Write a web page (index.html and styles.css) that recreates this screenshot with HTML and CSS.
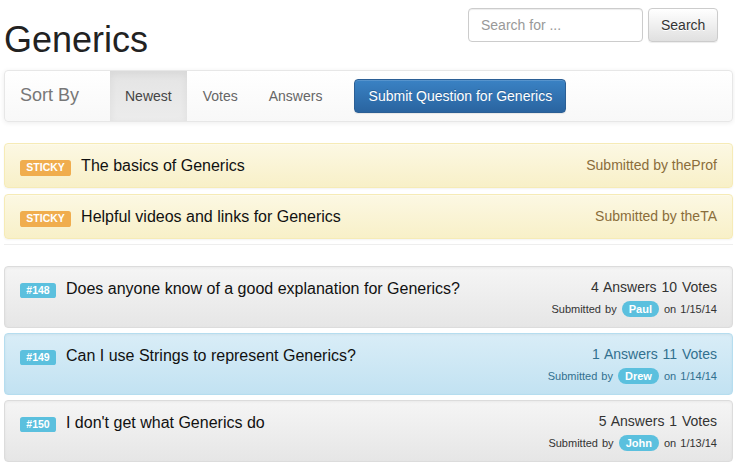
FILE: index.html
```html
<!DOCTYPE html>
<html>
<head>
<meta charset="utf-8">
<link rel="stylesheet" href="styles.css">
</head>
<body>
<div class="page">
  <div class="header">
    <h1 class="title">Generics</h1>
    <form class="search">
      <input class="search-input" type="text" placeholder="Search for ...">
      <button class="btn btn-default" type="button">Search</button>
    </form>
  </div>

  <nav class="navbar">
    <span class="brand">Sort By</span>
    <ul class="nav">
      <li class="nav-item active">Newest</li>
      <li class="nav-item">Votes</li>
      <li class="nav-item">Answers</li>
    </ul>
    <button class="btn btn-primary" type="button">Submit Question for Generics</button>
  </nav>

  <div class="sticky">
    <div class="sticky-title"><span class="label label-warning">STICKY</span><span class="q-text">The basics of Generics</span></div>
    <div class="sticky-by">Submitted by theProf</div>
  </div>
  <div class="sticky">
    <div class="sticky-title"><span class="label label-warning">STICKY</span><span class="q-text">Helpful videos and links for Generics</span></div>
    <div class="sticky-by">Submitted by theTA</div>
  </div>

  <hr class="divider">

  <div class="question">
    <div class="q-left"><span class="label label-info">#148</span><span class="q-text">Does anyone know of a good explanation for Generics?</span></div>
    <div class="q-right">
      <div class="q-stats">4 Answers 10 Votes</div>
      <div class="q-meta">Submitted by <span class="badge">Paul</span> on 1/15/14</div>
    </div>
  </div>
  <div class="question question-info">
    <div class="q-left"><span class="label label-info">#149</span><span class="q-text">Can I use Strings to represent Generics?</span></div>
    <div class="q-right">
      <div class="q-stats">1 Answers 11 Votes</div>
      <div class="q-meta">Submitted by <span class="badge">Drew</span> on 1/14/14</div>
    </div>
  </div>
  <div class="question">
    <div class="q-left"><span class="label label-info">#150</span><span class="q-text">I don't get what Generics do</span></div>
    <div class="q-right">
      <div class="q-stats">5 Answers 1 Votes</div>
      <div class="q-meta">Submitted by <span class="badge">John</span> on 1/13/14</div>
    </div>
  </div>
</div>
</body>
</html>
```

FILE: styles.css
```css
* { box-sizing: border-box; }

html, body {
  margin: 0;
  padding: 0;
  background: #fff;
}

body {
  font-family: "Liberation Sans", Arial, sans-serif;
  font-size: 14px;
  color: #333;
}

.page {
  padding: 0 2px 0 4px;
}

.header {
  display: flex;
  justify-content: space-between;
  align-items: flex-start;
  margin-bottom: 10px;
}

.title {
  margin: 20px 0 0 0;
  font-size: 36px;
  font-weight: normal;
  line-height: 39.6px;
  color: #222;
}

.search {
  display: flex;
  gap: 5px;
  margin: 8px 15px 0 0;
}

.search-input {
  width: 175px;
  height: 34px;
  padding: 6px 12px;
  font-family: "Liberation Sans", Arial, sans-serif;
  font-size: 14px;
  color: #555;
  border: 1px solid #ccc;
  border-radius: 4px;
  box-shadow: inset 0 1px 1px rgba(0,0,0,.075);
  outline: none;
}
.search-input::placeholder { color: #999; }

.btn {
  height: 34px;
  padding: 6px 12px;
  font-family: "Liberation Sans", Arial, sans-serif;
  font-size: 14px;
  line-height: 20px;
  border-radius: 4px;
  border: 1px solid transparent;
  cursor: pointer;
}

.btn-default {
  width: 70px;
  color: #333;
  background: linear-gradient(to bottom, #fff 0, #e0e0e0 100%);
  border-color: #ccc;
  text-shadow: 0 1px 0 #fff;
  box-shadow: inset 0 1px 0 rgba(255,255,255,.15), 0 1px 1px rgba(0,0,0,.075);
}

.btn-primary {
  width: 212px;
  margin: 8px 0 0 17px;
  padding: 6px 12px;
  color: #fff;
  background: linear-gradient(to bottom, #3a82c4 0, #2a64a0 100%);
  border-color: #2b5f95;
  text-shadow: 0 -1px 0 rgba(0,0,0,.2);
  box-shadow: inset 0 1px 0 rgba(255,255,255,.15), 0 1px 1px rgba(0,0,0,.075);
  align-self: flex-start;
}

.navbar {
  display: flex;
  align-items: stretch;
  height: 52px;
  margin-bottom: 21px;
  border: 1px solid #e7e7e7;
  border-radius: 4px;
  background: linear-gradient(to bottom, #fff 0, #f8f8f8 100%);
  box-shadow: inset 0 1px 0 rgba(255,255,255,.15), 0 1px 5px rgba(0,0,0,.075);
}

.brand {
  display: flex;
  align-items: center;
  width: 105px;
  padding: 0 15px;
  font-size: 18px;
  color: #777;
}

.nav {
  display: flex;
  margin: 0;
  padding: 0;
  list-style: none;
}

.nav-item {
  display: flex;
  align-items: center;
  padding: 0 15px;
  color: #666;
}

.nav-item + .nav-item { padding-left: 16px; }

.nav-item.active {
  color: #444;
  background: linear-gradient(to bottom, #e4e4e4 0, #ececec 100%);
  box-shadow: inset 0 3px 9px rgba(0,0,0,.06);
}

.sticky {
  display: flex;
  justify-content: space-between;
  align-items: center;
  height: 45px;
  margin-bottom: 6px;
  padding: 0 15px;
  border: 1px solid #f6ebb6;
  border-radius: 4px;
  background: linear-gradient(to bottom, #fcf8e3 0, #f8f0c8 100%);
  box-shadow: inset 0 1px 0 rgba(255,255,255,.25), 0 1px 2px rgba(0,0,0,.05);
}

.sticky + .sticky { margin-bottom: 5px; }

.sticky-title {
  display: flex;
  align-items: baseline;
  margin-top: 2px;
}

.sticky-by {
  color: #8a6d3b;
  font-size: 14px;
}

.q-text {
  margin-left: 10px;
  font-size: 16px;
  line-height: 20px;
  color: #111;
}

.label {
  display: inline-block;
  padding: .2em .6em .3em;
  font-size: 10.5px;
  font-weight: bold;
  line-height: 1;
  color: #fff;
  border-radius: .25em;
}

.label-warning { background: #f0ad4e; }
.label-info { background: #5bc0de; }

.divider {
  margin: 0 0 21px 0;
  border: 0;
  border-top: 1px solid #eee;
}

.question {
  display: flex;
  justify-content: space-between;
  align-items: flex-start;
  height: 62px;
  margin-bottom: 5px;
  padding: 10px 15px;
  border: 1px solid #dcdcdc;
  border-radius: 4px;
  background: linear-gradient(to bottom, #f5f5f5 0, #e6e6e6 100%);
  box-shadow: inset 0 1px 3px rgba(0,0,0,.05), 0 1px 0 rgba(255,255,255,.1);
}

.question-info {
  border-color: #b5ddef;
  background: linear-gradient(to bottom, #d9edf7 0, #c2e2f2 100%);
}

.question-info .q-stats,
.question-info .q-meta { color: #31708f; }

.q-left {
  display: flex;
  align-items: baseline;
  margin-top: 2px;
}

.q-right {
  text-align: right;
}

.q-stats {
  font-size: 14px;
  line-height: 20px;
  color: #333;
  word-spacing: 1px;
}

.q-meta {
  margin-top: 4px;
  font-size: 11px;
  line-height: 16px;
  color: #333;
  word-spacing: 1px;
}

.badge {
  display: inline-block;
  padding: 3px 7px 2px;
  margin: 0 1px;
  font-size: 11px;
  font-weight: bold;
  line-height: 1;
  color: #fff;
  background: #5bc0de;
  border-radius: 10px;
}
```
